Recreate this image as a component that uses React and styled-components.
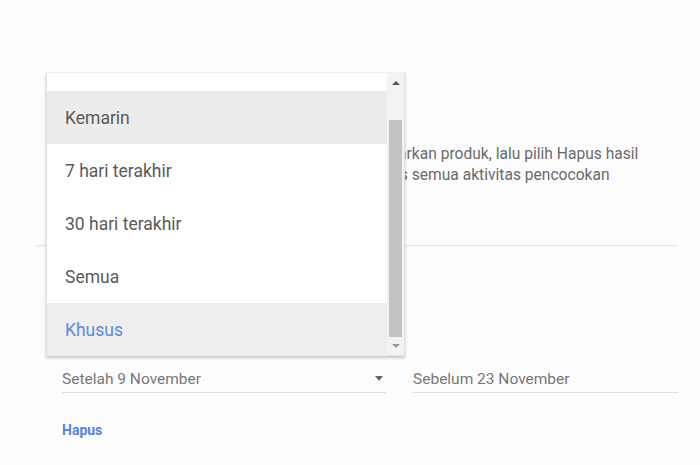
import React from "react";
import styled, { createGlobalStyle } from "styled-components";

const Global = createGlobalStyle`
  html, body { margin: 0; padding: 0; background: #fdfdfd; }
  body { font-family: Roboto, "Noto Sans", Arial, sans-serif; }
  #root { width: 700px; height: 465px; overflow: hidden; }
`;

const Page = styled.div`
  position: relative;
  width: 700px;
  height: 465px;
  padding-top: 144px;
  box-sizing: border-box;
`;

const Section = styled.div`
  margin-left: 37px;
  width: 641px;
`;

const Description = styled.p`
  margin: 0 0 0 25px;
  font-size: 15.6px;
  line-height: 21px;
  color: #6a6a6a;
  white-space: nowrap;
`;

const Divider = styled.hr`
  margin: 59px 0 0;
  border: 0;
  border-top: 1px solid #e3e3e3;
  height: 0;
`;

const FieldRow = styled.div`
  display: flex;
  gap: 27px;
  margin: 119px 0 0 25px;
`;

const Field = styled.div`
  display: flex;
  align-items: center;
  justify-content: space-between;
  width: ${(p) => p.$w}px;
  height: 28px;
  box-sizing: border-box;
  border-bottom: 1px solid #dedede;
  font-size: 15.5px;
  color: #777;
  padding-right: 3px;
`;

const Caret = styled.span`
  width: 0;
  height: 0;
  border-left: 4.5px solid transparent;
  border-right: 4.5px solid transparent;
  border-top: 5px solid #666;
`;

const ClearLink = styled.a`
  display: inline-block;
  margin: 29px 0 0 25px;
  font-size: 14px;
  line-height: 16px;
  font-weight: 700;
  color: #5283e3;
`;

const Menu = styled.div`
  position: absolute;
  left: 46px;
  top: 72px;
  width: 359px;
  height: 284px;
  display: flex;
  background: #fff;
  border: 1px solid #e2e2e2;
  border-top-color: #efefef;
  box-sizing: border-box;
  box-shadow: 0 2px 3px rgba(0, 0, 0, 0.22);
`;

const List = styled.ul`
  flex: 1;
  margin: 0;
  padding: 18px 0 0;
  list-style: none;
`;

const Item = styled.li`
  height: 53px;
  display: flex;
  align-items: center;
  padding-left: 18px;
  font-size: 17.5px;
  color: ${(p) => (p.$selected ? "#5b8ae2" : "#5a5a5a")};
  background: ${(p) => (p.$hover ? "#ececec" : p.$selected ? "#eeeeee" : "transparent")};
`;

const Scrollbar = styled.div`
  width: 17px;
  display: flex;
  flex-direction: column;
  align-items: center;
  background: #f3f3f3;
  padding-top: 8px;
  box-sizing: border-box;
`;

const Arrow = styled.span`
  width: 0;
  height: 0;
  border-left: 4px solid transparent;
  border-right: 4px solid transparent;
  ${(p) =>
    p.$up
      ? "border-bottom: 4px solid #555;"
      : "border-top: 4px solid #9a9a9a;"}
`;

const Thumb = styled.div`
  width: 13px;
  height: 217px;
  margin: 35px 0 7px;
  background: #c3c3c3;
`;

const items = ["Kemarin", "7 hari terakhir", "30 hari terakhir", "Semua", "Khusus"];

export default function App() {
  return (
    <>
      <Global />
      <Page>
        <Section>
          <Description>
            Untuk menghapus aktivitas tertentu, filter berdasarkan produk, lalu pilih Hapus hasil
            <br />
            atau pilih Hapus di menu kanan untuk menghapus semua aktivitas pencocokan
          </Description>
          <Divider />
          <FieldRow>
            <Field $w={324}>
              <span>Setelah 9 November</span>
              <Caret />
            </Field>
            <Field $w={265}>
              <span>Sebelum 23 November</span>
            </Field>
          </FieldRow>
          <ClearLink>Hapus</ClearLink>
        </Section>
        <Menu>
          <List>
            {items.map((t, i) => (
              <Item key={t} $hover={i === 0} $selected={t === "Khusus"}>
                {t}
              </Item>
            ))}
          </List>
          <Scrollbar>
            <Arrow $up />
            <Thumb />
            <Arrow />
          </Scrollbar>
        </Menu>
      </Page>
    </>
  );
}
